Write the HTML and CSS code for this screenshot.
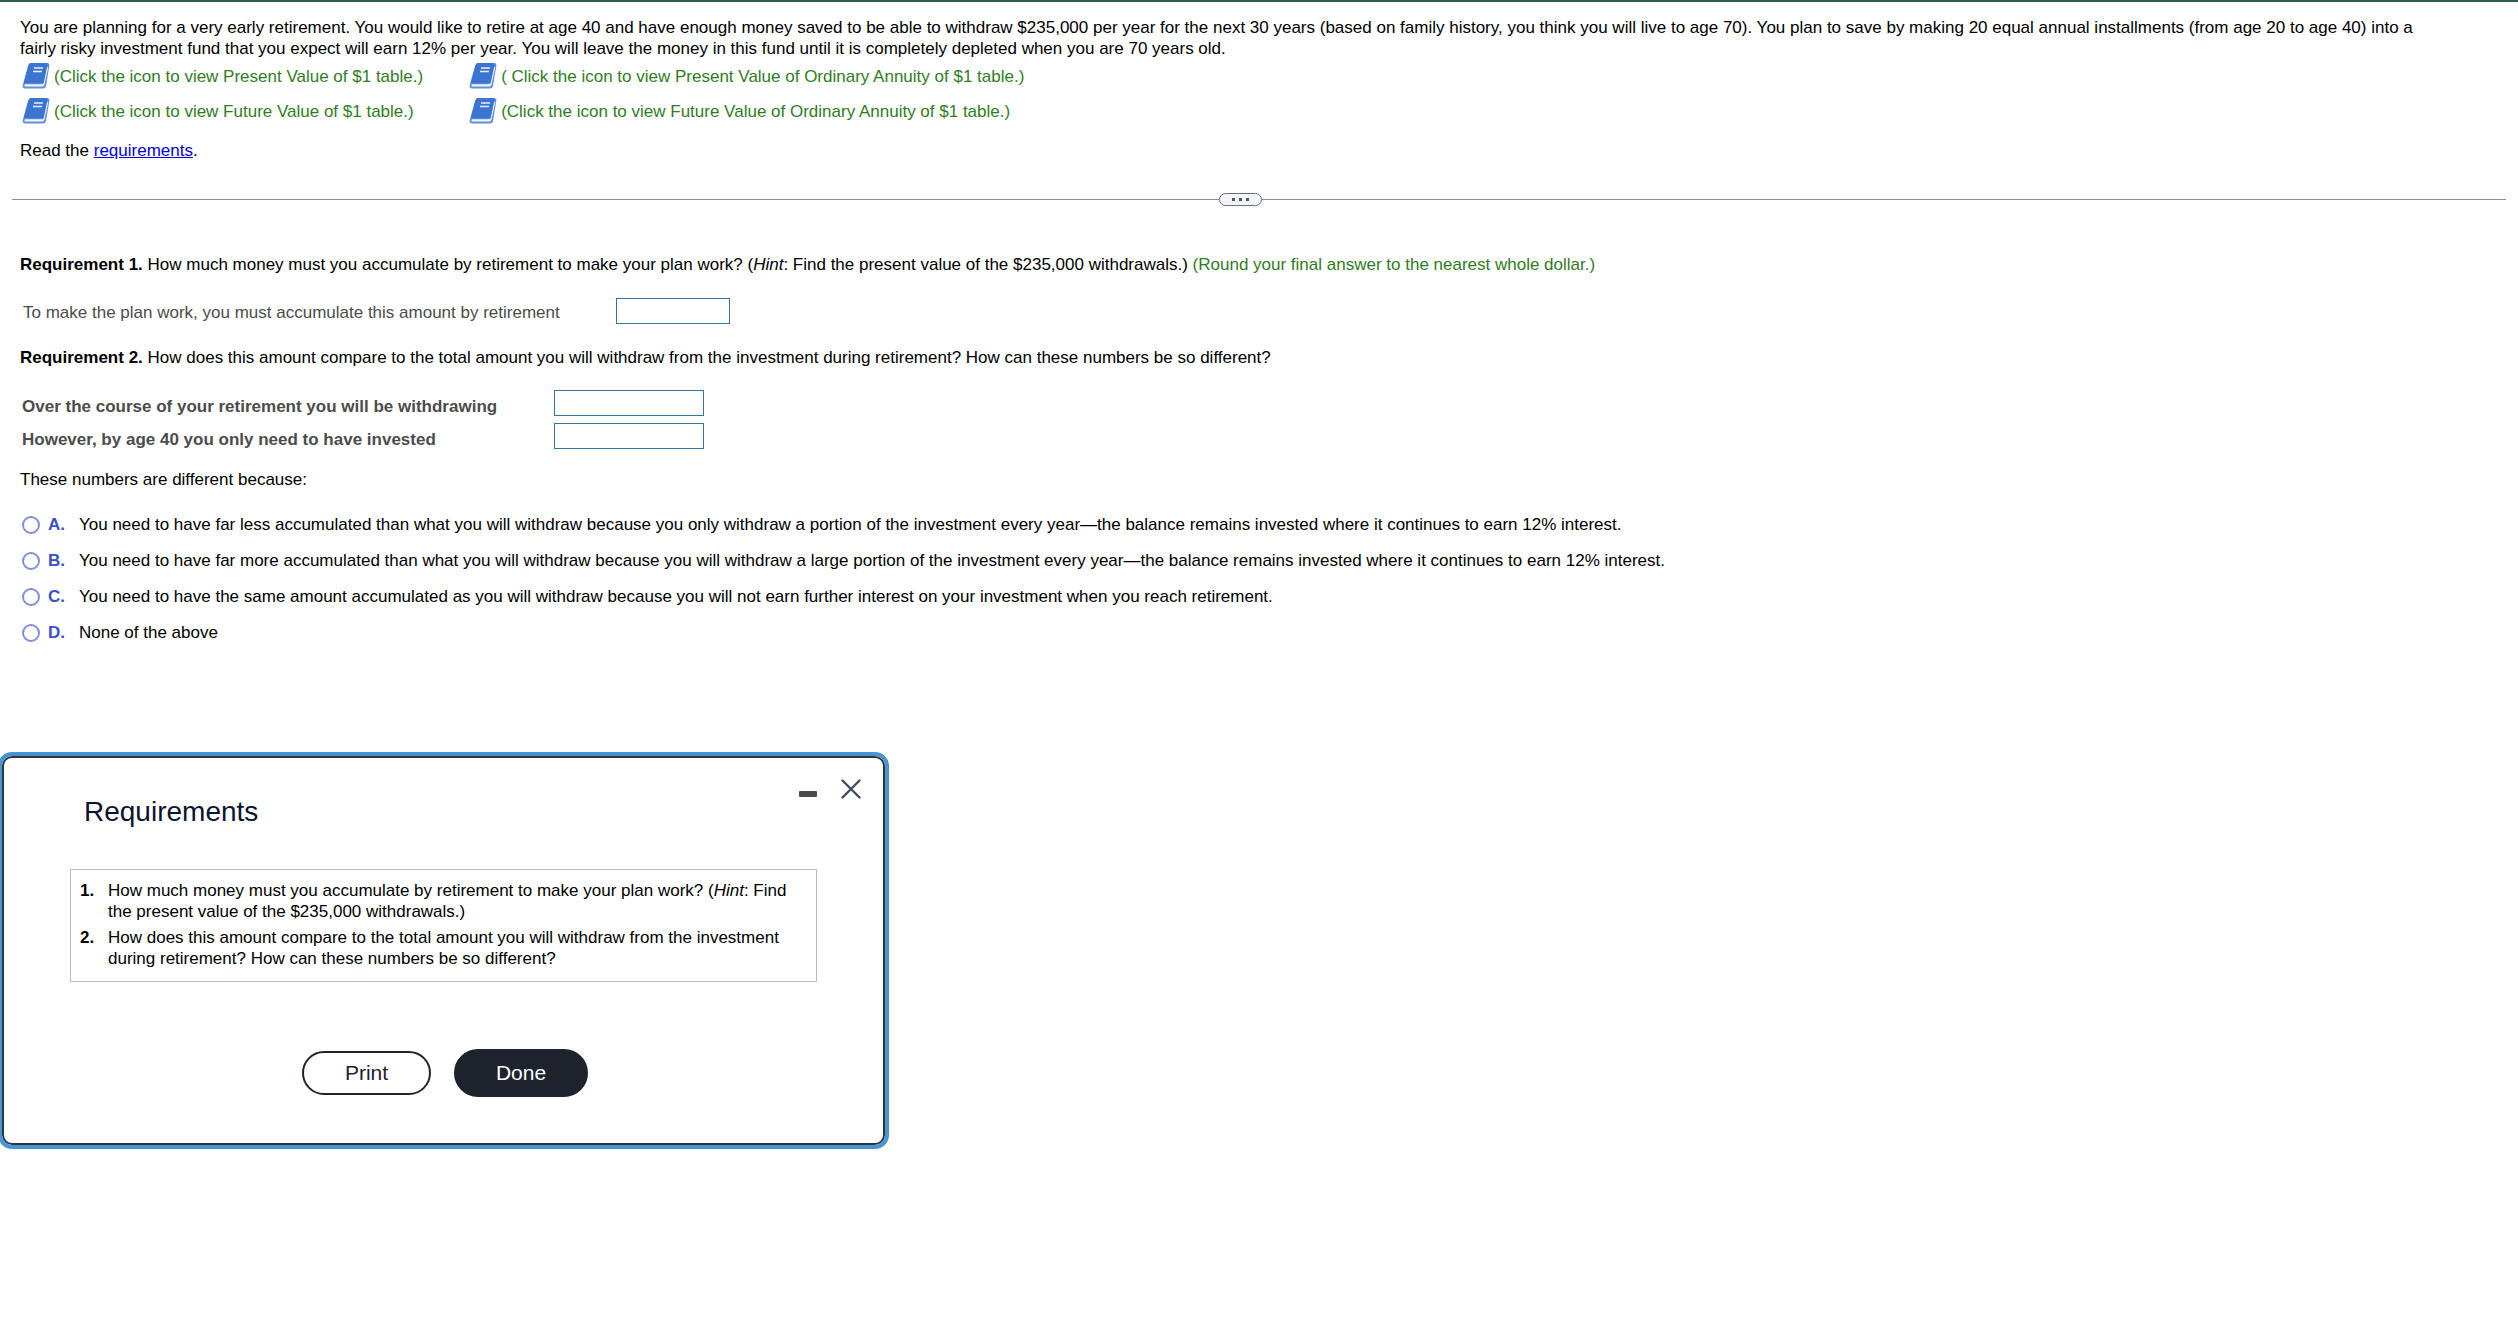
FILE: index.html
```html
<!DOCTYPE html>
<html lang="en">
<head>
    <meta charset="UTF-8">
    <meta name="viewport" content="width=device-width, initial-scale=1.0">
    <title>Retirement planning</title>
    <link rel="stylesheet" href="styles.css">
</head>
<body>

    <!-- Book icon shared by the table links -->
    <svg class="symbols" aria-hidden="true">
        <symbol id="book" viewBox="0 0 28 28">
            <path d="M9 1H25.500q2.200.2 1.900 2.500L24 24q-.6 2.500-3 2.500H3q-2.800-.3-2.300-3L6.200 3.500Q6.900 1 9 1z" fill="#6190dd"/>
            <path d="M25 5L21.800 21q-.5 1.300-2 1.300H3q-1.300 1.200 0 2.200h17.200q1.700 0 2.200-1.700L26.200 5.500z" fill="#f2f6fd"/>
            <path d="M9 1H24.400q1.300.2 1 1.800L21.700 19.800q-.4 1.400-1.800 1.400H1.600L6.600 3Q7.300 1 9 1z" fill="#3b74d1"/>
            <path d="M12 6h9M11 9.500h9" stroke="#e8effb" stroke-width="1.600"/>
        </symbol>
    </svg>

    <div class="problem">
        <p>You are planning for a very early retirement. You would like to retire at age 40 and have enough money saved to be able to withdraw $235,000 per year for the next 30 years (based on family history, you think you will live to age 70). You plan to save by making 20 equal annual installments (from age 20 to age 40) into a fairly risky investment fund that you expect will earn 12% per year. You will leave the money in this fund until it is completely depleted when you are 70 years old.</p>

        <div class="table-links">
            <a href="#pv"><svg class="book"><use href="#book"/></svg>(Click the icon to view Present Value of $1 table.)</a>
            <a href="#pva"><svg class="book"><use href="#book"/></svg>( Click the icon to view Present Value of Ordinary Annuity of $1 table.)</a>
            <a href="#fv"><svg class="book"><use href="#book"/></svg>(Click the icon to view Future Value of $1 table.)</a>
            <a href="#fva"><svg class="book"><use href="#book"/></svg>(Click the icon to view Future Value of Ordinary Annuity of $1 table.)</a>
        </div>

        <p>Read the <a href="#requirements">requirements</a>.</p>
    </div>

    <div class="divider">
        <button class="handle" aria-label="Resize"><span></span><span></span><span></span></button>
    </div>

    <form class="answers">
        <p><b>Requirement 1.</b> How much money must you accumulate by retirement to make your plan work? (<i>Hint</i>: Find the present value of the $235,000 withdrawals.) <span class="note">(Round your final answer to the nearest whole dollar.)</span></p>

        <div class="field plan">
            <label for="accumulate">To make the plan work, you must accumulate this amount by retirement</label>
            <input type="text" id="accumulate">
        </div>

        <p><b>Requirement 2.</b> How does this amount compare to the total amount you will withdraw from the investment during retirement? How can these numbers be so different?</p>

        <div class="compare">
            <div class="field">
                <label for="withdrawing">Over the course of your retirement you will be withdrawing</label>
                <input type="text" id="withdrawing">
            </div>
            <div class="field">
                <label for="invested">However, by age 40 you only need to have invested</label>
                <input type="text" id="invested">
            </div>
        </div>

        <p>These numbers are different because:</p>

        <div class="choices">
            <label><input type="radio" name="reason"><b>A.</b><span>You need to have far less accumulated than what you will withdraw because you only withdraw a portion of the investment every year—the balance remains invested where it continues to earn 12% interest.</span></label>
            <label><input type="radio" name="reason"><b>B.</b><span>You need to have far more accumulated than what you will withdraw because you will withdraw a large portion of the investment every year—the balance remains invested where it continues to earn 12% interest.</span></label>
            <label><input type="radio" name="reason"><b>C.</b><span>You need to have the same amount accumulated as you will withdraw because you will not earn further interest on your investment when you reach retirement.</span></label>
            <label><input type="radio" name="reason"><b>D.</b><span>None of the above</span></label>
        </div>
    </form>

    <div class="dialog" id="requirements" role="dialog" aria-labelledby="dialog-title">
        <div class="dialog-header">
            <h2 id="dialog-title">Requirements</h2>
            <div class="window-buttons">
                <button aria-label="Minimize">
                    <svg width="18" height="20"><rect y="12" width="18" height="6" rx="1" fill="#4c4c4c"/></svg>
                </button>
                <button aria-label="Close">
                    <svg width="20" height="20"><path d="M1.500 1.500l17 17M18.500 1.500l-17 17" stroke="#414b5a" stroke-width="2.400" stroke-linecap="round"/></svg>
                </button>
            </div>
        </div>

        <ol class="requirement-list">
            <li>How much money must you accumulate by retirement to make your plan work? (<i>Hint</i>: Find the present value of the $235,000 withdrawals.)</li>
            <li>How does this amount compare to the total amount you will withdraw from the investment during retirement? How can these numbers be so different?</li>
        </ol>

        <div class="dialog-actions">
            <button class="print">Print</button>
            <button class="done">Done</button>
        </div>
    </div>

</body>
</html>
```

FILE: styles.css
```css
* {
    box-sizing: border-box;
}

body {
    margin: 0;
    border-top: 2px solid #2a5c56;
    background-color: white;
    color: black;
    font-family: "Liberation Sans", Arial, sans-serif;
    font-size: 17px;
    line-height: 21px;
}

p {
    margin: 0;
}

button {
    padding: 0;
    border: none;
    background: none;
    font-family: inherit;
    cursor: pointer;
}

.symbols {
    display: none;
}

/* Problem text */
.problem {
    padding: 15px 100px 32px 20px;
}

.problem p a {
    color: #0000ee;
}

.table-links {
    display: grid;
    grid-template-columns: max-content max-content;
    column-gap: 46px;
    row-gap: 7px;
    margin: 3px 0 15px 2px;
}

.table-links a {
    display: flex;
    align-items: center;
    gap: 4px;
    height: 28px;
    color: #2f7d1e;
    text-decoration: none;
}

.book {
    width: 28px;
    height: 28px;
}

/* Divider with handle */
.divider {
    display: flex;
    align-items: center;
    margin: 0 12px;
}

.divider::before,
.divider::after {
    content: "";
    flex: 33;
    height: 1px;
    background-color: #868e9f;
}

.divider::after {
    flex: 34;
}

.handle {
    display: flex;
    align-items: center;
    justify-content: center;
    gap: 4px;
    width: 43px;
    height: 13px;
    border: 1px solid #657181;
    border-radius: 7px;
    background-color: #f3f4f6;
}

.handle span {
    width: 3px;
    height: 3px;
    background-color: #555;
}

/* Answers */
.answers {
    padding: 48px 20px 0;
}

.note {
    color: #2f7d1e;
}

.field {
    display: flex;
    align-items: flex-end;
    color: #4c4c4c;
}

.field label {
    margin-bottom: 1px;
}

.field input {
    height: 26px;
    border: 1px solid #2f7899;
}

.plan {
    padding-left: 3px;
    margin: 23px 0;
}

.plan label {
    width: 593px;
}

.plan input {
    width: 114px;
}

.compare {
    display: flex;
    flex-direction: column;
    gap: 5px;
    margin: 22px 0 18px 2px;
    font-weight: bold;
}

.compare label {
    width: 532px;
}

.compare input {
    width: 150px;
    margin-bottom: 2px;
}

.choices {
    display: flex;
    flex-direction: column;
    gap: 15px;
    margin-top: 24px;
    padding-left: 2px;
}

.choices label {
    display: flex;
    align-items: center;
}

.choices input {
    appearance: none;
    width: 18px;
    height: 18px;
    margin: 0 8px 0 0;
    border: 2px solid #8090dd;
    border-radius: 50%;
}

.choices input:checked {
    background-color: #3c50c4;
}

.choices b {
    width: 31px;
    color: #3c50c4;
}

/* Requirements dialog */
.dialog {
    width: 891px;
    margin: 109px 0 0 -2px;
    padding: 20px 24px 48px 68px;
    border: 4px solid #4796d3;
    border-radius: 14px;
    box-shadow: inset 0 0 0 2px #2f353d;
}

.dialog-header {
    display: flex;
    justify-content: space-between;
    align-items: flex-start;
}

.dialog-header h2 {
    margin: 20px 0 0 14px;
    color: #0a1430;
    font-size: 28px;
    font-weight: normal;
    line-height: 32px;
}

.window-buttons {
    display: flex;
    gap: 24px;
    margin-top: 3px;
}

.window-buttons svg {
    display: block;
}

.requirement-list {
    width: 747px;
    margin: 41px 0 67px;
    padding: 10px 12px 12px 28px;
    border: 1px solid #bbb;
}

.requirement-list li {
    padding-left: 9px;
}

.requirement-list li + li {
    margin-top: 5px;
}

.requirement-list li::marker {
    font-weight: bold;
}

.dialog-actions {
    display: flex;
    justify-content: center;
    align-items: center;
    gap: 23px;
    width: 750px;
}

.dialog-actions button {
    width: 129px;
    height: 44px;
    border: 2px solid #1f232e;
    border-radius: 24px;
    color: #1f232e;
    font-size: 21px;
}

.dialog-actions .done {
    width: 134px;
    height: 48px;
    background-color: #1f232e;
    color: white;
}
```
